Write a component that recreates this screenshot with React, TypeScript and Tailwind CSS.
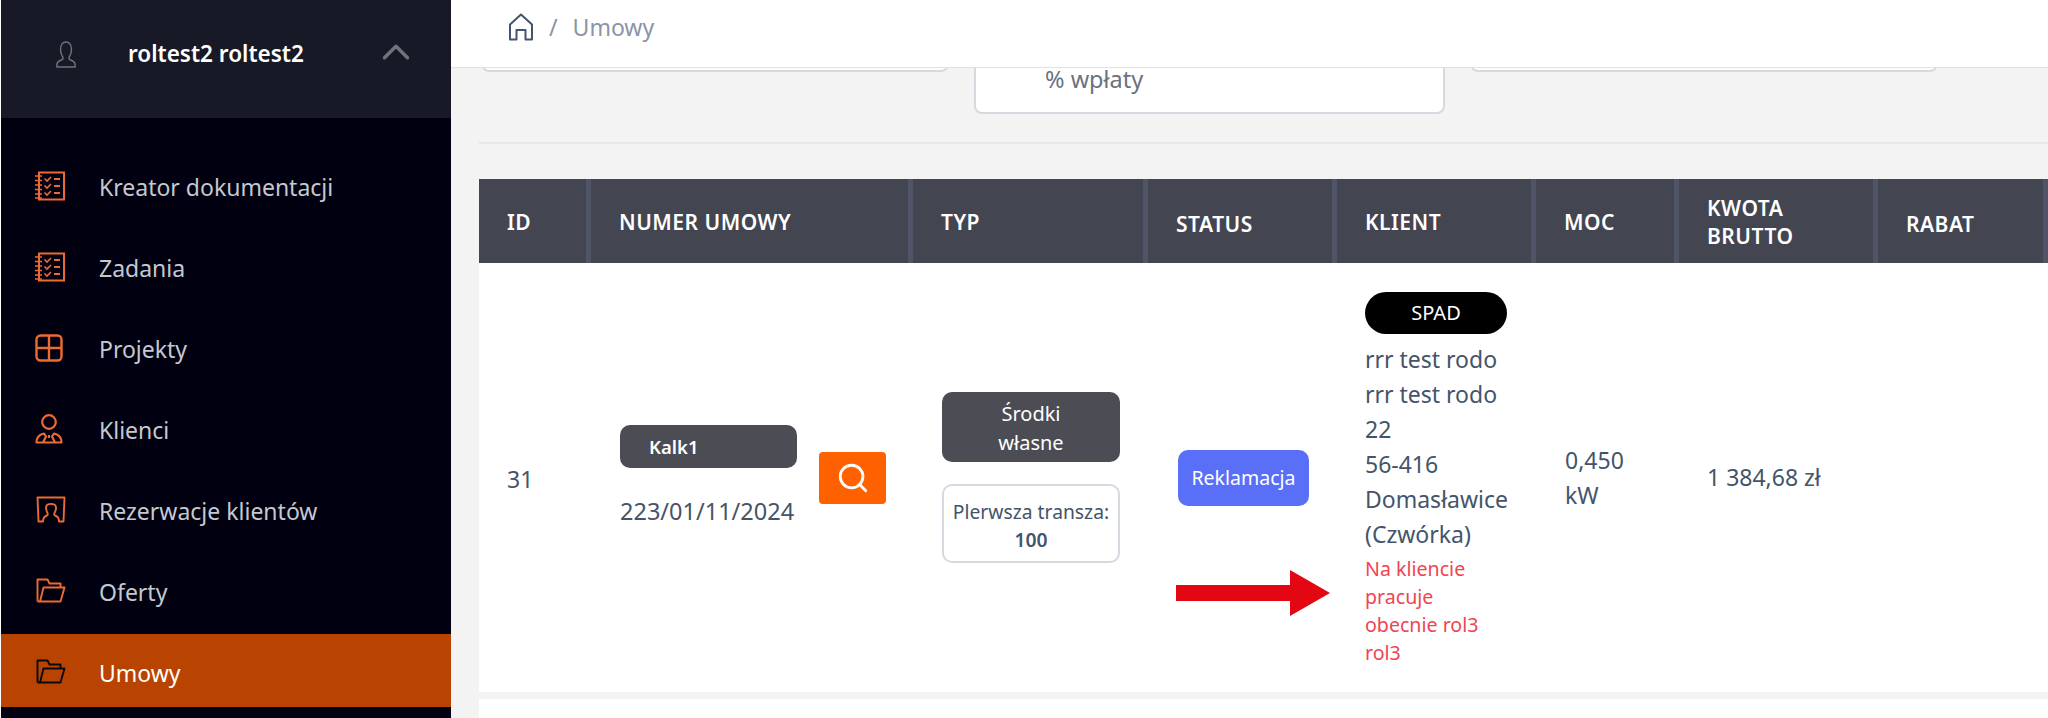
import { ChevronUp, Search } from 'lucide-react';

const font = { fontFamily: '"Noto Sans", "Open Sans", sans-serif' };

function ChecklistIcon() {
  return (
    <svg width="30" height="30" viewBox="0 0 30 30" fill="none" stroke="currentColor" strokeWidth="2">
      <rect x="4" y="1.500" width="25" height="27" />
      <path d="M0 5h7M0 9.500h7M0 14h7M0 18.500h7M0 23h7M0 27h7" strokeWidth="1.600" />
      <path d="M9.500 7.500l2.500 2.500 4-4M9.500 14.500l2.500 2.500 4-4M9.500 21.500l2.500 2.500 4-4" strokeWidth="1.600" />
      <path d="M19 8h6M19 15h6M19 22h6" strokeWidth="1.800" />
    </svg>
  );
}

function GridIcon() {
  return (
    <svg width="28" height="28" viewBox="0 0 28 28" fill="none" stroke="currentColor" strokeWidth="2.400">
      <rect x="1.500" y="1.500" width="25" height="25" rx="4" />
      <path d="M14 1.500v25M1.500 14h25" />
    </svg>
  );
}

function ClientIcon() {
  return (
    <svg width="28" height="30" viewBox="0 0 28 30" fill="none" stroke="currentColor" strokeWidth="2.200">
      <circle cx="14" cy="8" r="6.800" />
      <path d="M1.500 28.500c0-5 3-8 7.500-9l2 3-3 6zM26.500 28.500c0-5-3-8-7.500-9l-2 3 3 6zM1.500 28.500h25M14 21v3" strokeLinejoin="round" />
    </svg>
  );
}

function ReservationIcon() {
  return (
    <svg className="ml-px" width="30" height="27" viewBox="0 0 30 27" fill="none" stroke="currentColor" strokeWidth="1.900" strokeLinejoin="round">
      <path d="M7 25.500H2.500L1.500 1.500h27l-1 24H23c0-3-1-5-4-6-1-.5-1-2 0-3.500 1-2 1.300-3.500.8-5.500-1-3.500-8.600-3.500-9.600 0-.5 2 0 3.500.8 5.500 1 1.500 1 3 0 3.500-3 1-4 3-4 6z" />
    </svg>
  );
}

function FolderIcon() {
  return (
    <svg className="ml-px" width="30" height="25" viewBox="0 0 30 25" fill="none" stroke="currentColor" strokeWidth="1.900" strokeLinejoin="round">
      <path d="M1.500 23.500V1.500h10l2 4h11v4" />
      <path d="M1.500 23.500h23l4-14H7.500l-3.500 14" />
    </svg>
  );
}

function HomeIcon() {
  return (
    <svg width="26" height="28" viewBox="0 0 26 28" fill="none" stroke="#44546f" strokeWidth="2" strokeLinejoin="round">
      <path d="M2 26.500V11.500L13 1.500l11 10v15h-6.500V17h-9v9.500z" />
    </svg>
  );
}

function UserIcon() {
  return (
    <svg width="20" height="27" viewBox="0 0 22 28" preserveAspectRatio="none" fill="none" stroke="#6f737c" strokeWidth="1.600" strokeLinejoin="round">
      <path d="M1 27v-3c0-2.500 3-3.500 5.500-4.500 1.500-.7 1.500-2.500.3-4-1.300-2-1.800-4-1.800-6.500C5 4 7.500 1 11 1s6 3 6 8c0 2.500-.5 4.500-1.800 6.500-1.200 1.500-1.200 3.300.3 4 2.500 1 5.500 2 5.500 4.500v3z" />
    </svg>
  );
}

const items = [
  { name: 'Kreator dokumentacji', icon: <ChecklistIcon /> },
  { name: 'Zadania', icon: <ChecklistIcon /> },
  { name: 'Projekty', icon: <GridIcon /> },
  { name: 'Klienci', icon: <ClientIcon /> },
  { name: 'Rezerwacje klientów', icon: <ReservationIcon /> },
  { name: 'Oferty', icon: <FolderIcon /> },
  { name: 'Umowy', icon: <FolderIcon />, active: true },
];

function Sidebar() {
  return (
    <aside className="ml-px flex h-full w-[450px] shrink-0 flex-col bg-[#000011]">
      <div className="flex h-[118px] shrink-0 items-center bg-[#171a26] pb-[10px] pl-[55px] pr-[32px]">
        <UserIcon />
        <span className="ml-[52px] flex-1 text-[22.500px] font-semibold whitespace-nowrap text-white">roltest2 roltest2</span>
        <ChevronUp className="mb-[4px] h-[46px] w-[46px] text-[#6f737c]" strokeWidth={1.800} />
      </div>
      <ul className="flex flex-col gap-[8px] pt-[30px]">
        {items.map((item) => (
          <li
            key={item.name}
            className={`flex h-[73px] items-center pt-[2px] pl-[34px] ${
              item.active ? 'bg-[#b94300] text-[#0a0a14]' : 'text-[#ed6a31]'
            }`}
          >
            <span className="flex w-[64px] shrink-0 items-center">{item.icon}</span>
            <span className={`pt-[3px] text-[23px] ${item.active ? 'text-white' : 'text-[#c5c8cf]'}`}>{item.name}</span>
          </li>
        ))}
      </ul>
    </aside>
  );
}

const headers = [
  { label: 'ID', width: 'w-[112px]' },
  { label: 'NUMER UMOWY', width: 'w-[322px]' },
  { label: 'TYP', width: 'w-[235px]' },
  { label: 'STATUS', width: 'w-[189px]', low: true },
  { label: 'KLIENT', width: 'w-[199px]' },
  { label: 'MOC', width: 'w-[143px]' },
  { label: 'KWOTA BRUTTO', width: 'w-[199px]' },
  { label: 'RABAT', width: 'w-[170px]', low: true },
];

function ContractsTable() {
  return (
    <table className="w-[1569px] table-fixed border-separate border-spacing-0 text-[23px] text-[#44546a]">
      <thead>
        <tr className="h-[84px] bg-[#434551]">
          {headers.map((h) => (
            <th
              key={h.label}
              className={`${h.width} border-r-[5px] border-[#4f5566] pr-[20px] pl-[28px] text-left text-[21px] leading-[28px] font-semibold tracking-[0.500px] text-white ${
                h.low ? 'pt-[6px]' : 'pt-[2px]'
              }`}
            >
              {h.label}
            </th>
          ))}
        </tr>
      </thead>
      <tbody>
        <tr className="h-[429px] bg-white align-middle">
          <td className="pt-[4px] pl-[28px]">31</td>
          <td className="pl-[29px]">
            <div className="flex items-center gap-[22px]">
              <div className="flex w-[177px] flex-col gap-[26px]">
                <div className="flex h-[43px] items-center rounded-[10px] bg-[#4b4c54] pl-[29px] text-[18.500px] font-semibold text-white">Kalk1</div>
                <div className="text-[23.500px] whitespace-nowrap">223/01/11/2024</div>
              </div>
              <div className="flex h-[52px] w-[67px] items-center justify-center rounded-[4px] bg-[#ff6000] text-white">
                <Search className="h-[34px] w-[34px]" strokeWidth={2} />
              </div>
            </div>
          </td>
          <td className="pl-[29px]">
            <div className="flex w-[178px] flex-col gap-[22px] text-center">
              <div className="rounded-[10px] bg-[#4b4c54] pt-[7px] pb-[5px] text-[20px] leading-[29px] text-white">
                Środki
                <br />
                własne
              </div>
              <div className="rounded-[10px] border-2 border-[#d5d9e0] pt-[12px] pb-[7px] text-[19.300px] leading-[28px] whitespace-nowrap">
                Plerwsza transza:
                <br />
                <span className="font-semibold">100</span>
              </div>
            </div>
          </td>
          <td className="pl-[30px]">
            <div className="flex h-[56px] w-[131px] items-center justify-center rounded-[10px] bg-[#5a6ff7] text-[19.500px] text-white">Reklamacja</div>
          </td>
          <td className="pl-[28px]">
            <div className="flex w-[145px] flex-col pt-[4px]">
              <div className="mb-[8px] flex h-[42px] w-[142px] items-center justify-center rounded-full bg-black text-[20px] text-white">SPAD</div>
              <div className="leading-[35px]">
                rrr test rodo
                <br />
                rrr test rodo
                <br />
                22
                <br />
                56-416
                <br />
                Domasławice
                <br />
                (Czwórka)
              </div>
              <div className="pt-[3px] text-[19.600px] leading-[28px] text-[#f04452]">
                Na kliencie
                <br />
                pracuje
                <br />
                obecnie rol3
                <br />
                rol3
              </div>
            </div>
          </td>
          <td className="pl-[29px] leading-[35px]">
            0,450
            <br />
            kW
          </td>
          <td className="pl-[28px] whitespace-nowrap">1 384,68 zł</td>
          <td />
        </tr>
      </tbody>
    </table>
  );
}

export default function App() {
  return (
    <div className="flex h-[718px] overflow-hidden bg-white" style={font}>
      <Sidebar />
      <main className="relative flex min-w-0 flex-1 flex-col">
        <div className="relative z-10 flex h-[68px] shrink-0 items-center gap-[15px] border-b border-[#dfe2e8] bg-white pb-[13px] pl-[57px] text-[23px] text-[#8a94a6]">
          <HomeIcon />
          <span>/</span>
          <span>Umowy</span>
        </div>
        <div className="min-h-0 flex-1 bg-[#f3f3f3] pl-[28px]">
          <div className="-mt-[30px] flex items-start gap-[25px] pl-[2px]">
            <div className="h-[34px] w-[468px] rounded-[8px] border-2 border-[#d5d9e0] bg-white" />
            <div className="flex h-[76px] w-[471px] items-end rounded-[8px] border-2 border-[#d5d9e0] bg-white pb-[15px] pl-[69px] text-[23.500px] text-[#6b7280]">% wpłaty</div>
            <div className="h-[34px] w-[468px] rounded-[8px] border-2 border-[#d5d9e0] bg-white" />
          </div>
          <div className="mt-[28px] border-t-2 border-[#e6e7ec]" />
          <div className="mt-[35px]">
            <ContractsTable />
          </div>
          <div className="mt-[7px] h-[30px] bg-white" />
        </div>
        <svg className="absolute top-[570px] left-[725px]" width="155" height="46" viewBox="0 0 155 46" fill="#e30613">
          <path d="M0 15h114V0l40 23-40 23V31H0z" />
        </svg>
      </main>
    </div>
  );
}
